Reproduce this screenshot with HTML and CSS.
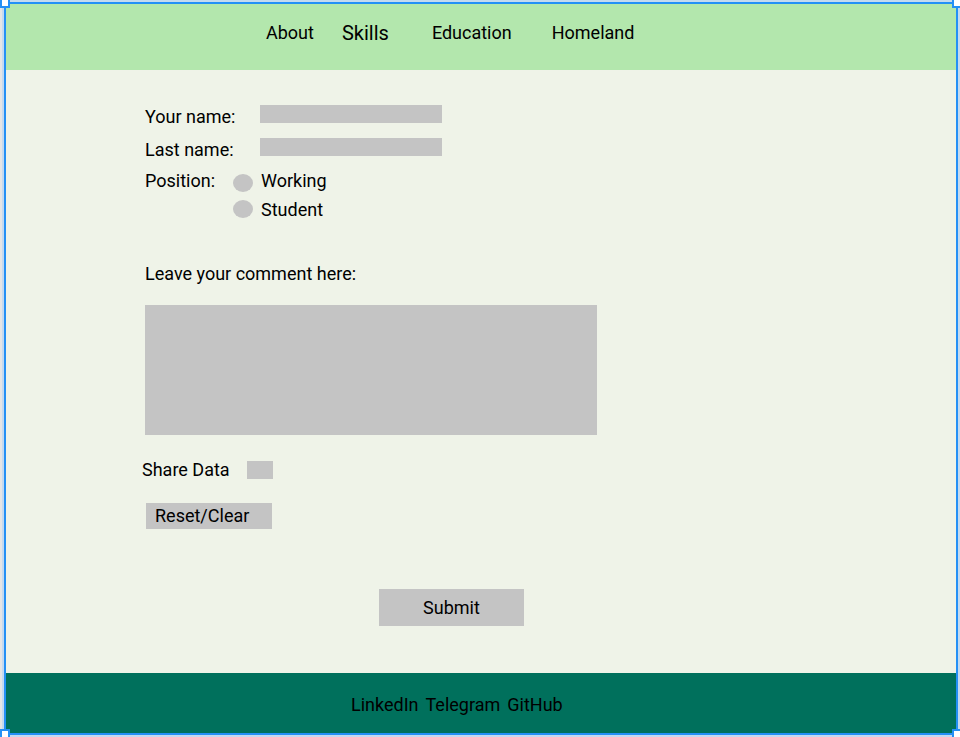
FILE: index.html
```html
<!DOCTYPE html>
<html lang="en">
<head>
<meta charset="utf-8">
<meta name="viewport" content="width=device-width, initial-scale=1">
<title>Feedback form</title>
<link rel="stylesheet" href="styles.css">
</head>
<body>
<div class="frame">
  <header class="header">
    <nav class="nav">
      <a href="#about">About</a>
      <a class="current" href="#skills">Skills</a>
      <a href="#education">Education</a>
      <a href="#homeland">Homeland</a>
    </nav>
  </header>
  <main class="main">
    <form class="form">
      <div class="fields">
        <label for="first">Your name:</label>
        <input class="box text" id="first" type="text">
        <label for="last">Last name:</label>
        <input class="box text" id="last" type="text">
      </div>
      <div class="position" role="radiogroup" aria-labelledby="position">
        <span id="position">Position:</span>
        <input class="box radio" id="working" type="radio" name="position">
        <label for="working">Working</label>
        <input class="box radio second" id="student" type="radio" name="position">
        <label for="student">Student</label>
      </div>
      <label class="comment-label" for="comment">Leave your comment here:</label>
      <textarea class="box comment" id="comment"></textarea>
      <div class="share">
        <label for="share">Share Data</label>
        <input class="box check" id="share" type="checkbox">
      </div>
      <button class="box reset" type="reset">Reset/Clear</button>
      <button class="box submit" type="submit">Submit</button>
    </form>
  </main>
  <footer class="footer">
    <a href="#linkedin">LinkedIn</a>
    <a href="#telegram">Telegram</a>
    <a href="#github">GitHub</a>
  </footer>
  <i class="handle top left"></i>
  <i class="handle top right"></i>
  <i class="handle bottom left"></i>
  <i class="handle bottom right"></i>
</div>
</body>
</html>
```
FILE: styles.css
```css
* {
  box-sizing: border-box;
}

body {
  display: flex;
  min-height: 100vh;
  margin: 0;
  padding: 2px 2px 2px 4px;
  overflow: hidden;
  background: #e5e5e5;
  color: #000;
  font: 18px/32px Roboto, sans-serif;
}

a {
  color: inherit;
  text-decoration: none;
}

.frame {
  position: relative;
  display: flex;
  flex: 1;
  flex-direction: column;
  border: 2px solid #2490f5;
  background: #eff3e8;
  box-shadow: 0 0 0 2px #c4daf0;
}

.header {
  padding: 13px 0 21px 260px;
  background: #b3e7ad;
}

.nav {
  display: flex;
}

.nav a {
  margin-right: 40px;
}

.nav a:first-child {
  margin-right: 28px;
}

.nav .current {
  margin-right: 43px;
  font-size: 20px;
}

.main {
  flex: 1;
  padding: 31px 0 46px 136px;
}

.form {
  display: flex;
  flex-direction: column;
  align-items: flex-start;
}

.box {
  appearance: none;
  margin: 0;
  padding: 0;
  border: 0;
  border-radius: 0;
  background: #c4c4c4;
  color: inherit;
  font: inherit;
}

.fields,
.position {
  display: grid;
  margin-left: 3px;
}

.fields {
  grid-template-columns: 115px 182px;
  grid-auto-rows: 33px;
}

.text {
  height: 18px;
  margin-top: 4px;
}

.position {
  grid-template-columns: 88px 28px auto;
  grid-auto-rows: 29px;
  line-height: 28px;
}

.radio {
  width: 20px;
  height: 18px;
  margin-top: 7px;
  border-radius: 50%;
}

.second {
  grid-column: 2;
  margin-top: 4px;
}

.comment-label {
  margin: 33px 0 15px 3px;
}

.comment {
  width: 452px;
  height: 130px;
  margin-left: 3px;
  padding: 8px;
  resize: none;
}

.share {
  display: flex;
  align-items: center;
  gap: 17px;
  margin: 19px 0 17px;
}

.check {
  width: 26px;
  height: 18px;
}

.reset {
  width: 126px;
  height: 26px;
  margin-left: 4px;
  padding-left: 9px;
  line-height: 26px;
  text-align: left;
}

.submit {
  width: 145px;
  height: 37px;
  margin: 60px 0 0 237px;
}

.footer {
  display: flex;
  gap: 7px;
  padding: 16px 0 12px 345px;
  background: #00705c;
}

.handle {
  position: absolute;
  width: 10px;
  height: 10px;
  border: 2px solid #2490f5;
  background: #fff;
}

.top {
  top: -6px;
}

.bottom {
  bottom: -6px;
}

.left {
  left: -6px;
}

.right {
  right: -6px;
}
```
